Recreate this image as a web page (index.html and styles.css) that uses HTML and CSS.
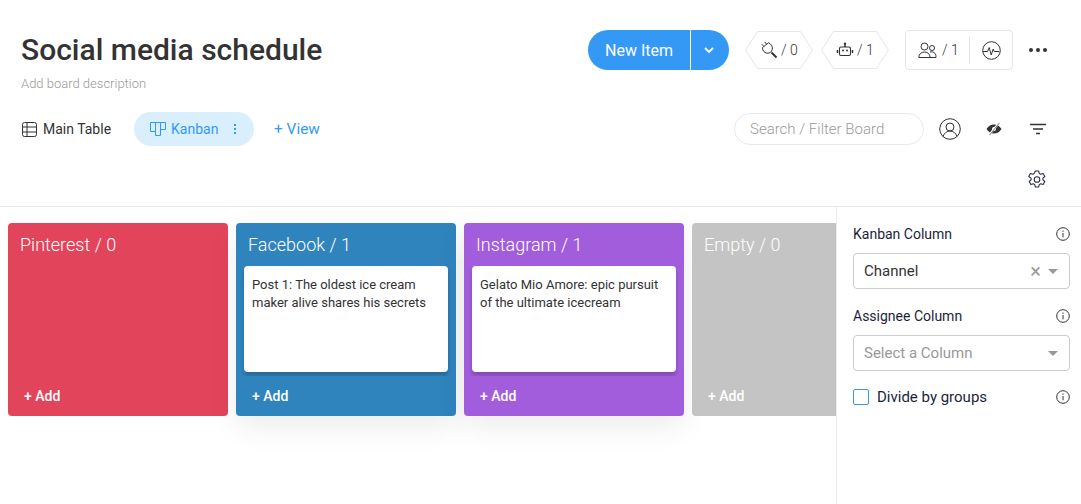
FILE: index.html
```html
<!DOCTYPE html>
<html>
<head>
    <meta charset="utf-8">
    <title>Social media schedule</title>
    <link rel="stylesheet" href="styles.css">
</head>
<body>
    <header class="board-header">
        <div class="title-row">
            <div class="title-block">
                <h1>Social media schedule</h1>
                <p class="description">Add board description</p>
            </div>
            <div class="actions">
                <div class="new-item">
                    <span class="new-item-label">New Item</span>
                    <span class="new-item-arrow">
                        <svg width="12" height="8" viewBox="0 0 12 8"><path d="M2 2l4 4 4-4" fill="none" stroke="#fff" stroke-width="1.8"/></svg>
                    </span>
                </div>
                <div class="hex">
                    <svg class="hex-bg" width="68" height="38" viewBox="0 0 68 38"><path d="M12.5 .5H55.5L67.4 19 55.5 37.5H12.5L.6 19Z" fill="#fff" stroke="#e6e6e6"/></svg>
                    <svg class="hex-icon" width="18" height="18" viewBox="0 0 18 18" fill="none" stroke="#333" stroke-width="1"><path d="M2.500 6.500L8.500 1.800c2.500 1 4.300 3.500 3.800 6.500-.4 2.500-2.800 4.300-5.300 3.900-2.800-.4-4.700-3-4.500-5.700z"/><path d="M3.800 5.400L1.800 3.200M6.600 3.200L4.800 1"/><path d="M11.500 11.500l5 5" stroke-width="1.900"/></svg>
                    <span>/ 0</span>
                </div>
                <div class="hex">
                    <svg class="hex-bg" width="68" height="38" viewBox="0 0 68 38"><path d="M12.5 .5H55.5L67.4 19 55.5 37.5H12.5L.6 19Z" fill="#fff" stroke="#e6e6e6"/></svg>
                    <svg class="hex-icon" width="18" height="18" viewBox="0 0 18 18" fill="none" stroke="#333" stroke-width="1.100"><rect x="3.500" y="6" width="11" height="8.500" rx="1.500"/><path d="M9 3.500V6M1.500 9v3M16.500 9v3" stroke-width="1.500"/><circle cx="9" cy="2.800" r="1.200" fill="#333" stroke="none"/><circle cx="7" cy="9.500" r="1" fill="#333" stroke="none"/><circle cx="11" cy="9.500" r="1" fill="#333" stroke="none"/></svg>
                    <span>/ 1</span>
                </div>
                <div class="members">
                    <div class="members-count">
                        <svg width="19" height="17" viewBox="0 0 19 17" fill="none" stroke="#333" stroke-width="1"><circle cx="6.500" cy="4.500" r="3.500"/><circle cx="14" cy="6" r="2.500"/><path d="M.8 15.500c0-3.500 2.500-5.500 5.700-5.500s5.500 2 5.500 5.500z"/><path d="M12 10c3-.8 6 1 6 4.500v1h-6"/></svg>
                        <span>/ 1</span>
                    </div>
                    <div class="activity">
                        <svg width="19" height="19" viewBox="0 0 19 19" fill="none" stroke="#333" stroke-width="1"><circle cx="9.500" cy="9.500" r="8.800"/><path d="M.8 10.500h4.700l1.700-4 2 7.500 2-6 1 2.500h5"/></svg>
                    </div>
                </div>
                <div class="more"><i></i><i></i><i></i></div>
            </div>
        </div>
        <div class="view-row">
            <div class="tab">
                <svg class="table-icon" width="15" height="15" viewBox="0 0 15 15" fill="none" stroke="#333" stroke-width="1"><rect x=".5" y=".5" width="14" height="14" rx="2"/><path d="M.5 5h14M.5 10h14M5 .5v14"/></svg>
                <span>Main Table</span>
            </div>
            <div class="tab tab-active">
                <svg width="16" height="14" viewBox="0 0 16 14" fill="none" stroke="#3399f5" stroke-width="1"><path d="M.5 .5h5v9h-5zM5.500 .5h5v13h-5zM10.500 .5h5v7h-5z"/></svg>
                <span>Kanban</span>
                <span class="tab-dots"><i></i><i></i><i></i></span>
            </div>
            <div class="add-view">+ View</div>
            <div class="tools">
                <div class="search">Search / Filter Board</div>
                <svg class="tool" width="22" height="22" viewBox="0 0 22 22" fill="none" stroke="#333" stroke-width="1"><circle cx="11" cy="11" r="10.300"/><circle cx="11" cy="9" r="4"/><path d="M4 18.500c1-3.500 4-5.500 7-5.500s6 2 7 5.500"/></svg>
                <svg class="tool" width="16" height="14" viewBox="0 0 16 14"><path d="M.5 7C2.500 3.800 5 2.500 8 2.500s5.500 1.300 7.500 4.500c-2 3.200-4.500 4.500-7.500 4.500S2.500 10.200.5 7z" fill="#333"/><circle cx="8" cy="7" r="2" fill="#fff"/><path d="M13 .8L3 13.200" stroke="#fff" stroke-width="2"/><path d="M13.500 .8L3.500 13.200" stroke="#777" stroke-width="1"/></svg>
                <svg class="tool" width="16" height="12" viewBox="0 0 16 12" fill="none" stroke="#333" stroke-width="1.500"><path d="M0 1.500h16M3 6h10M6 10.500h4"/></svg>
            </div>
        </div>
        <div class="settings-row">
            <svg width="18" height="19" viewBox="0 0 18 19" fill="none" stroke="#2b2c4a" stroke-width="1.100"><path d="M7.300 1h3.400l.5 2.400 1.500.9 2.400-.8 1.700 3-1.900 1.600v1.800l1.900 1.600-1.700 3-2.400-.8-1.500.9-.5 2.400H7.300l-.5-2.400-1.500-.9-2.400.8-1.700-3 1.900-1.600V8.100L.7 6.500l1.700-3 2.400.8 1.500-.9z" stroke-linejoin="round"/><circle cx="9" cy="9.500" r="2.800"/></svg>
        </div>
    </header>
    <div class="content">
        <div class="board">
            <section class="column pinterest">
                <h2>Pinterest / 0</h2>
                <div class="cards"></div>
                <div class="add">+ Add</div>
            </section>
            <section class="column facebook">
                <h2>Facebook / 1</h2>
                <div class="cards">
                    <div class="card">Post 1: The oldest ice cream maker alive shares his secrets</div>
                </div>
                <div class="add">+ Add</div>
            </section>
            <section class="column instagram">
                <h2>Instagram / 1</h2>
                <div class="cards">
                    <div class="card">Gelato Mio Amore: epic pursuit of the ultimate icecream</div>
                </div>
                <div class="add">+ Add</div>
            </section>
            <section class="column empty">
                <h2>Empty / 0</h2>
                <div class="cards"></div>
                <div class="add">+ Add</div>
            </section>
        </div>
        <aside class="sidebar">
            <div class="field-label">
                <span>Kanban Column</span>
                <svg class="info" width="14" height="14" viewBox="0 0 14 14" fill="none" stroke="#333" stroke-width="1"><circle cx="7" cy="7" r="6.300"/><path d="M7 6v4.300M7 3.500v1.300"/></svg>
            </div>
            <div class="select">
                <span class="select-value">Channel</span>
                <span class="select-clear">×</span>
                <span class="select-arrow"></span>
            </div>
            <div class="field-label">
                <span>Assignee Column</span>
                <svg class="info" width="14" height="14" viewBox="0 0 14 14" fill="none" stroke="#333" stroke-width="1"><circle cx="7" cy="7" r="6.300"/><path d="M7 6v4.300M7 3.500v1.300"/></svg>
            </div>
            <div class="select">
                <span class="select-value placeholder">Select a Column</span>
                <span class="select-arrow"></span>
            </div>
            <div class="check-row">
                <span class="checkbox"></span>
                <span class="check-label">Divide by groups</span>
                <svg class="info" width="14" height="14" viewBox="0 0 14 14" fill="none" stroke="#333" stroke-width="1"><circle cx="7" cy="7" r="6.300"/><path d="M7 6v4.300M7 3.500v1.300"/></svg>
            </div>
        </aside>
    </div>
</body>
</html>
```

FILE: styles.css
```css
* {
    box-sizing: border-box;
}
body {
    margin: 0;
    height: 504px;
    overflow: hidden;
    background: #fff;
    color: #333;
    font-family: Roboto, "Liberation Sans", sans-serif;
    font-size: 14px;
}

/* header */
.board-header {
    height: 207px;
    border-bottom: 1px solid #e6e9ef;
}
.title-row {
    display: flex;
    justify-content: space-between;
    height: 108px;
    padding: 30px 33px 0 21px;
}
.title-block h1 {
    margin: 0;
    font-size: 30px;
    line-height: 40px;
    font-weight: 500;
    color: #333;
}
.description {
    margin: 5px 0 0;
    font-size: 13px;
    line-height: 18px;
    font-weight: 300;
    color: #999;
}
.actions {
    display: flex;
    align-items: flex-start;
}
.new-item {
    display: flex;
    width: 141px;
    height: 40px;
    margin-right: 16px;
    color: #fff;
    font-size: 16px;
    line-height: 41px;
}
.new-item-label {
    width: 102px;
    padding-left: 17px;
    background: #3399f5;
    border-radius: 20px 0 0 20px;
}
.new-item-arrow {
    display: flex;
    align-items: center;
    justify-content: center;
    width: 38px;
    padding-right: 3px;
    margin-left: 1px;
    background: #3399f5;
    border-radius: 0 20px 20px 0;
}
.hex {
    position: relative;
    display: flex;
    align-items: center;
    width: 68px;
    height: 38px;
    margin: 1px 8px 0 0;
    padding-left: 15px;
    font-size: 14px;
    font-weight: 300;
}
.hex-bg {
    position: absolute;
    left: 0;
    top: 0;
}
.hex-icon, .hex span {
    position: relative;
}
.hex span {
    margin-left: 3px;
}
.members {
    display: flex;
    align-items: center;
    width: 108px;
    height: 40px;
    margin: 0 16px 0 8px;
    border: 1px solid #e6e6e6;
    border-radius: 4px;
    font-weight: 300;
}
.members-count {
    display: flex;
    align-items: center;
    gap: 5px;
    width: 64px;
    height: 28px;
    padding-left: 12px;
    border-right: 1px solid #e6e6e6;
}
.activity {
    display: flex;
    flex: 1;
    justify-content: center;
}
.more {
    display: flex;
    gap: 3px;
    margin: 18px 1px 0 0;
}
.more i {
    width: 4px;
    height: 4px;
    border-radius: 50%;
    background: #333;
}

/* views and tools */
.view-row {
    display: flex;
    align-items: center;
    height: 42px;
    padding-left: 21px;
}
.tab {
    display: flex;
    align-items: center;
    gap: 6px;
    font-size: 14px;
}
.table-icon {
    margin-left: 1px;
}
.tab-active {
    gap: 5px;
    width: 120px;
    height: 34px;
    margin-left: 23px;
    padding-left: 16px;
    border-radius: 17px;
    background: #d9effd;
    color: #3399f5;
}
.tab-dots {
    display: flex;
    flex-direction: column;
    gap: 2px;
    margin-left: 11px;
}
.tab-dots i {
    width: 2px;
    height: 2px;
    background: #3399f5;
}
.add-view {
    margin-left: 20px;
    font-size: 15.4px;
    color: #3399f5;
}
.tools {
    display: flex;
    align-items: center;
    margin-left: auto;
    padding-right: 35px;
}
.search {
    width: 190px;
    height: 32px;
    padding-left: 15px;
    border: 1px solid #e6e9ef;
    border-radius: 16px;
    line-height: 30px;
    font-size: 15px;
    font-weight: 300;
    color: #9a9a9a;
}
.tool {
    margin-left: 15px;
}
.tool + .tool {
    margin-left: 25px;
}
.tool + .tool + .tool {
    margin-left: 28px;
}
.settings-row {
    display: flex;
    justify-content: flex-end;
    padding: 20px 35px 0 0;
}

/* board */
.content {
    display: flex;
    height: 297px;
}
.board {
    display: flex;
    gap: 8px;
    flex: none;
    width: 836px;
    padding: 16px 0 0 8px;
    overflow: hidden;
}
.column {
    display: flex;
    flex: none;
    flex-direction: column;
    width: 220px;
    height: 193px;
    border-radius: 4px;
    color: #fff;
}
.column h2 {
    margin: 0;
    padding: 9px 12px 0;
    height: 43px;
    font-size: 18px;
    line-height: 26px;
    font-weight: 300;
}
.cards {
    flex: 1;
    padding: 0 8px;
    overflow: hidden;
}
.card {
    height: 106px;
    padding: 10px 8px;
    border-radius: 4px;
    background: #fff;
    color: #333;
    font-size: 13px;
    line-height: 18px;
    box-shadow: 0 4px 4px rgba(0, 0, 0, .2);
}
.add {
    height: 40px;
    padding-left: 16px;
    font-size: 14px;
    line-height: 40px;
    font-weight: 500;
}
.pinterest {
    background: #e2445c;
}
.facebook {
    background: #2f84bd;
    box-shadow: 0 10px 30px rgba(0, 0, 0, .08);
}
.instagram {
    background: #a25ddc;
    box-shadow: 0 10px 30px rgba(0, 0, 0, .08);
}
.empty {
    background: #c4c4c4;
}

/* settings panel */
.sidebar {
    flex: 1;
    padding: 16px 11px 0 16px;
    border-left: 1px solid #e6e9ef;
    color: #1c1f3b;
}
.field-label {
    display: flex;
    align-items: center;
    justify-content: space-between;
    height: 22px;
    font-size: 14px;
}
.select {
    display: flex;
    align-items: center;
    height: 36px;
    margin: 8px 0 16px;
    padding: 0 11px 0 10px;
    border: 1px solid #ccc;
    border-radius: 4px;
    font-size: 15px;
    color: #333;
}
.select-value {
    flex: 1;
}
.placeholder {
    color: #999;
}
.select-clear {
    margin-right: 7px;
    font-size: 20px;
    line-height: 18px;
    color: #999;
}
.select-arrow {
    width: 0;
    height: 0;
    border: 5px solid transparent;
    border-top-color: #999;
    border-bottom: 0;
}
.check-row {
    display: flex;
    align-items: center;
    margin-top: -1px;
    height: 22px;
}
.checkbox {
    width: 16px;
    height: 16px;
    margin-right: 8px;
    border: 1px solid #3399f5;
    border-radius: 2px;
}
.check-label {
    flex: 1;
    font-size: 15px;
}
```
